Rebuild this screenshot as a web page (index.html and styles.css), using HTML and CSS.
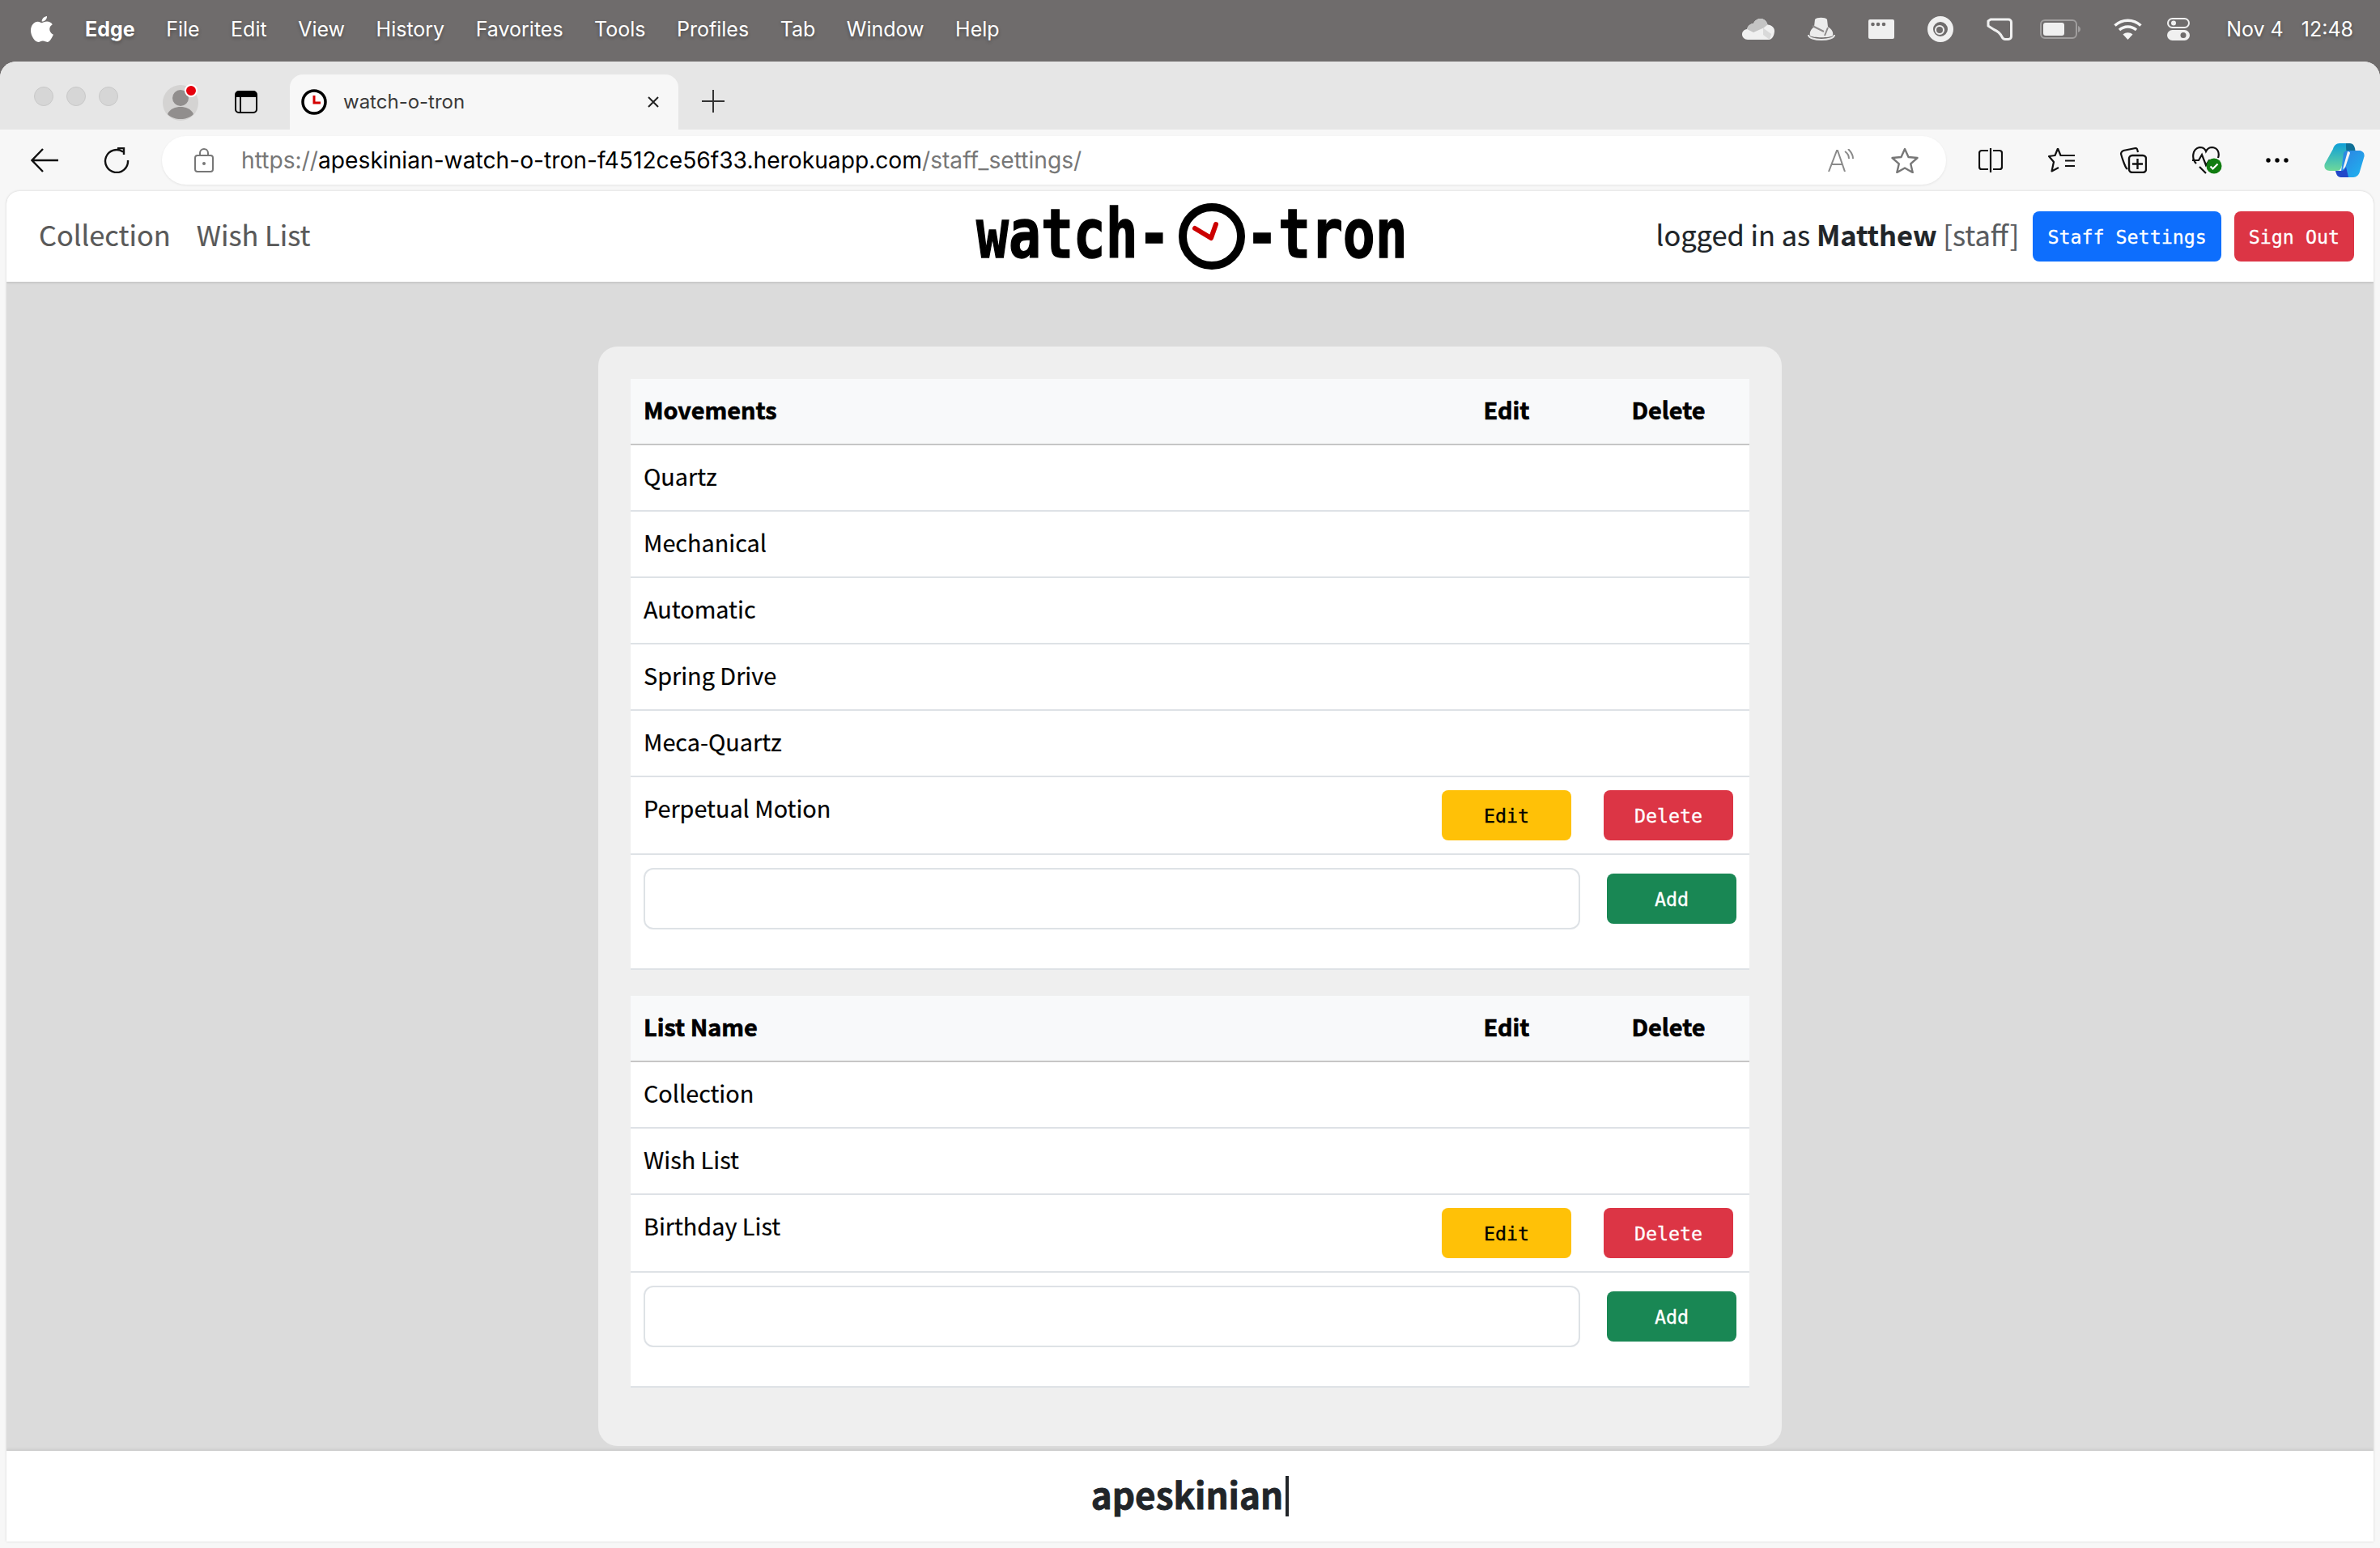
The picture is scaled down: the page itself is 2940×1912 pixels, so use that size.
FILE: index.html
```html
<!DOCTYPE html>
<html>
<head>
    <title>watch-o-tron</title>
    <link rel="stylesheet" href="styles.css">
</head>
<body>
    <!-- mac menu bar -->
    <div class="menubar">
        <svg class="apple" width="28" height="32" viewBox="0 0 28 32"><path fill="#fff" d="M20 0c.3 3-2.600 6.800-6.300 6.600C13.300 3.400 16.500.3 20 0zM13.800 8.200c1.300 0 3.400-1.600 6.200-1.600 2.700 0 5.300 1.300 6.800 3.600-5.300 3-4.500 10.300 1.100 12.500-1.300 3.300-4.300 9.200-7.500 9.200-2 0-3-1.300-5.500-1.300-2.600 0-3.700 1.400-5.500 1.400C5 32 0 24.300 0 17.800 0 11 4.400 6.800 8.600 6.800c2.200 0 4 1.400 5.200 1.400z"/></svg>
        <ul class="menu">
            <li class="app-name">Edge</li>
            <li>File</li>
            <li>Edit</li>
            <li>View</li>
            <li>History</li>
            <li>Favorites</li>
            <li>Tools</li>
            <li>Profiles</li>
            <li>Tab</li>
            <li>Window</li>
            <li>Help</li>
        </ul>
        <div class="status-icons">
            <svg width="40" height="26" viewBox="0 0 40 26"><path fill="#f0f0f0" d="M7 26C3 26 0 23 0 19.500 0 16 2.500 13.500 6 13 7.500 8 11 6 14 6c1.500-3.500 5-6 8.500-6 4.500 0 8 3 9 7.500C36.500 8 40 11 40 15c0 .5 0 9-6 11z"/><path fill="#c4c4c4" d="M6 13C7.500 8 11 6 14 6c1.500-3.500 5-6 8.500-6 4.500 0 8 3 9 7.500l-5 4L14 17z"/><path fill="#d9d9d9" d="M26 11.500L36 19l-2 7-8-6z"/></svg>
            <svg width="34" height="30" viewBox="0 0 34 30"><path fill="#ececec" d="M9 3c2-3 13-3 15 0l1 9c5 3 7 7 6 11-3 3-25 3-28 0C2 19 4 15 8 12z"/><path fill="none" stroke="#8d8a8a" stroke-width="2" d="M6 11l14 7M25 13l-4 10"/><path fill="none" stroke="#e8e8e8" stroke-width="2" d="M1 22c0 8 32 8 32 0"/></svg>
            <svg width="32" height="24" viewBox="0 0 32 24"><path fill="#f0f0f0" d="M2 0h28a2 2 0 0 1 2 2v20a2 2 0 0 1-2 2H2a2 2 0 0 1-2-2V2a2 2 0 0 1 2-2z"/><circle cx="5.500" cy="6" r="2.300" fill="#6f6c6c"/><circle cx="12" cy="6" r="2.300" fill="#6f6c6c"/><circle cx="19" cy="6" r="2.300" fill="#6f6c6c"/></svg>
            <svg width="32" height="32" viewBox="0 0 32 32"><circle cx="16" cy="16" r="12.500" fill="none" stroke="#f0f0f0" stroke-width="7"/><circle cx="15" cy="17" r="5" fill="none" stroke="#f0f0f0" stroke-width="2"/></svg>
            <svg width="32" height="28" viewBox="0 0 32 28"><path fill="none" stroke="#f0f0f0" stroke-width="3" stroke-linejoin="round" d="M5 2h22a3.500 3.500 0 0 1 3.500 3.500V23a3.500 3.500 0 0 1-3.500 3.500h-4c-2 0-3-1-4-3-2-4-5-7-10-9L2 10V4z"/></svg>
            <svg class="battery" width="50" height="24" viewBox="0 0 50 24"><rect x="1" y="1" width="44" height="22" rx="5" fill="none" stroke="#a09e9e" stroke-width="2"/><rect x="4" y="4" width="26" height="16" rx="3" fill="#f0f0f0"/><path fill="#a09e9e" d="M47 8c2 1 3 2 3 4s-1 3-3 4z"/></svg>
            <svg width="35" height="26" viewBox="0 0 35 26"><path fill="none" stroke="#f5f5f5" stroke-width="3.500" d="M1.500 8.500c9-8.500 23-8.500 32 0M7 14c6-5.500 15-5.500 21 0"/><path fill="#f5f5f5" d="M17.500 26l-6-6.500c3.500-3 8.500-3 12 0z"/></svg>
            <svg class="control" width="28" height="28" viewBox="0 0 28 28"><rect x="1" y="1" width="26" height="11" rx="5.500" fill="none" stroke="#f0f0f0" stroke-width="2"/><circle cx="8" cy="6.500" r="3" fill="#f0f0f0"/><rect y="15" width="28" height="13" rx="6.500" fill="#f0f0f0"/><circle cx="20" cy="21.500" r="3.500" fill="#6f6c6c"/></svg>
            <div class="clock"><span>Nov 4</span><span>12:48</span></div>
        </div>
    </div>

    <div class="window">
        <!-- tabs -->
        <div class="tabstrip">
            <div class="lights"><i></i><i></i><i></i></div>
            <svg class="profile" width="46" height="46" viewBox="0 0 46 46"><circle cx="22" cy="24" r="22" fill="#d4d3d2"/><circle cx="22" cy="18" r="10" fill="#918e8d"/><path fill="#918e8d" d="M6 38c3-7 10-9 16-9s13 2 16 9c-8 8-24 8-32 0z"/><circle cx="35" cy="9" r="7" fill="#e6000d" stroke="#fff" stroke-width="2"/></svg>
            <svg class="tab-actions" width="28" height="28" viewBox="0 0 28 28"><rect x="1" y="1" width="26" height="26" rx="4" fill="none" stroke="#000" stroke-width="2"/><path d="M1 8V5a4 4 0 0 1 4-4h18a4 4 0 0 1 4 4v3z"/><path stroke="#000" stroke-width="2" d="M7 8v19"/></svg>
            <div class="tab">
                <svg width="32" height="32" viewBox="0 0 32 32"><circle cx="16" cy="16" r="14" fill="#fff" stroke="#000" stroke-width="3.500"/><path fill="none" stroke="#d40000" stroke-width="3" d="M16 8v9h8"/></svg>
                <span class="tab-title">watch-o-tron</span>
                <svg class="tab-close" width="16" height="16" viewBox="0 0 16 16"><path stroke="#222" stroke-width="2" d="M2 2l12 12M14 2L2 14"/></svg>
            </div>
            <svg class="new-tab" width="28" height="28" viewBox="0 0 28 28"><path stroke="#333" stroke-width="2" d="M14 0v28M0 14h28"/></svg>
        </div>

        <!-- address bar -->
        <div class="toolbar">
            <svg class="back" width="34" height="30" viewBox="0 0 34 30"><path fill="none" stroke="#111" stroke-width="2.400" d="M34 15H2M15 1L1.500 15 15 29"/></svg>
            <svg class="reload" width="32" height="32" viewBox="0 0 32 32"><path fill="none" stroke="#111" stroke-width="2.400" d="M24 5.500A14 14 0 1 0 30 16M17 1h8v8"/></svg>
            <div class="urlbar">
                <svg width="24" height="30" viewBox="0 0 24 30"><rect x="1" y="9" width="22" height="20" rx="3" fill="none" stroke="#777" stroke-width="2"/><path fill="none" stroke="#777" stroke-width="2" d="M7 9V6a5 5 0 0 1 10 0v3"/><circle cx="12" cy="19" r="2" fill="#777"/></svg>
                <div class="url">https://<b>apeskinian-watch-o-tron-f4512ce56f33.herokuapp.com</b>/staff_settings/</div>
                <svg class="read-aloud" width="32" height="28" viewBox="0 0 32 28"><path fill="none" stroke="#8a8a8a" stroke-width="2" d="M1 28L11 2h1l9 26M5 19h13M21 3c3 2 5 5 5 9M25 0c3 3 6 7 6 12"/></svg>
                <svg class="star" width="34" height="32" viewBox="0 0 34 32"><path fill="none" stroke="#777" stroke-width="2.400" stroke-linejoin="round" d="M17 2l4.500 10 11 1-8.300 7.300 2.500 10.700L17 25.500 7.300 31l2.500-10.700L1.500 13l11-1z"/></svg>
            </div>
            <div class="tools">
                <svg width="30" height="30" viewBox="0 0 30 30"><path fill="none" stroke="#111" stroke-width="2.200" d="M12 3H4a3 3 0 0 0-3 3v17a3 3 0 0 0 3 3h8M18 3h8a3 3 0 0 1 3 3v17a3 3 0 0 1-3 3h-8M15 0v30"/></svg>
                <svg width="33" height="32" viewBox="0 0 33 32"><path fill="none" stroke="#111" stroke-width="2.200" stroke-linejoin="round" d="M12 1.500L8.500 10 1 11l6 7-2.500 11.500L13 25M12 1.500l3.500 8.500H33M21 16.500h12M21 23h12"/></svg>
                <svg width="33" height="32" viewBox="0 0 33 32"><rect x="11" y="10" width="21" height="21" rx="4" fill="none" stroke="#111" stroke-width="2.400"/><path stroke="#111" stroke-width="2.400" d="M21.500 14v13M15 20.500h13"/><path fill="none" stroke="#111" stroke-width="2.200" d="M9 27l-1-1C6 24 2 12 1 8c0-2 1-3 3-4l15-3c2 0 2 1 3 5"/></svg>
                <svg width="37" height="34" viewBox="0 0 37 34"><path fill="none" stroke="#111" stroke-width="2.200" d="M5 21C-1 15 0 3 9 1c4 0 7 2 8 5 2-4 5-5 8-5 7 1 9 7 7 13M0 17h8l4-7 5 13 4-6h4M9 25l8 8"/><circle cx="27" cy="24" r="9.500" fill="#107c10"/><path fill="none" stroke="#fff" stroke-width="2.200" d="M22.500 24.500l3 3 6-6"/></svg>
                <svg class="more" width="28" height="6" viewBox="0 0 28 6"><circle cx="3" cy="3" r="2.700"/><circle cx="14" cy="3" r="2.700"/><circle cx="25" cy="3" r="2.700"/></svg>
                <svg class="copilot" width="50" height="42" viewBox="0 0 50 42"><defs><linearGradient id="cpa" x1="0" y1="0" x2="0" y2="1"><stop offset="0" stop-color="#0d9fd8"/><stop offset="1" stop-color="#6ed89a"/></linearGradient><linearGradient id="cpb" x1="0" y1="0" x2="1" y2="1"><stop offset="0" stop-color="#2e7fe0"/><stop offset="1" stop-color="#1fb6f0"/></linearGradient></defs><path fill="url(#cpa)" d="M11 7c1-4 4-7 8-7h13l-11 30c-1 3-3 4-6 4H7c-5 0-8-4-6-9z"/><path fill="#0e6f96" d="M27 0h5c3 0 5 2 6 6l1 6-10-1c-2-1-2-4-2-11z"/><path fill="url(#cpb)" d="M24 12c1-2 3-3 5-3h14c5 0 8 4 6 9l-5 17c-1 4-4 7-8 7H20z"/><path fill="#2147c9" d="M14 34h7c3 0 5-2 6-5l3 13h-9c-4 0-6-3-7-8z"/><path fill="#f5f5f5" d="M29 10l-6 22c2-1 3-2 4-5l5-15c0-1-1-2-3-2z"/></svg>
            </div>
        </div>

        <div class="page">
            <header class="site-header">
                <nav class="site-nav">
                    <a>Collection</a>
                    <a>Wish List</a>
                </nav>
                <div class="logo">
                    <span class="logo-text">watch-</span>
                    <svg width="84" height="84" viewBox="0 0 84 84"><circle cx="42" cy="42" r="36" fill="none" stroke="#000" stroke-width="10"/><path fill="none" stroke="#cc0000" stroke-width="6" stroke-linecap="round" stroke-linejoin="round" d="M21 32l20 12 6-17"/></svg>
                    <span class="logo-text">-tron</span>
                </div>
                <div class="user-box">
                    <span class="user-text">logged in as <b>Matthew</b> <span class="muted">[staff]</span></span>
                    <button class="btn btn-blue">Staff Settings</button>
                    <button class="btn btn-red">Sign Out</button>
                </div>
            </header>

            <main class="content">
                <div class="panel">
                    <table class="list-table">
                        <thead>
                            <tr><th>Movements</th><th class="col-btn">Edit</th><th class="col-btn">Delete</th></tr>
                        </thead>
                        <tbody>
                            <tr><td>Quartz</td><td></td><td></td></tr>
                            <tr><td>Mechanical</td><td></td><td></td></tr>
                            <tr><td>Automatic</td><td></td><td></td></tr>
                            <tr><td>Spring Drive</td><td></td><td></td></tr>
                            <tr><td>Meca-Quartz</td><td></td><td></td></tr>
                            <tr>
                                <td>Perpetual Motion</td>
                                <td class="col-btn"><button class="btn btn-row btn-yellow">Edit</button></td>
                                <td class="col-btn"><button class="btn btn-row btn-red">Delete</button></td>
                            </tr>
                            <tr>
                                <td colspan="3" class="add-cell">
                                    <form class="add-form">
                                        <input type="text">
                                        <button type="button" class="btn btn-row btn-green">Add</button>
                                    </form>
                                </td>
                            </tr>
                        </tbody>
                    </table>

                    <table class="list-table">
                        <thead>
                            <tr><th>List Name</th><th class="col-btn">Edit</th><th class="col-btn">Delete</th></tr>
                        </thead>
                        <tbody>
                            <tr><td>Collection</td><td></td><td></td></tr>
                            <tr><td>Wish List</td><td></td><td></td></tr>
                            <tr>
                                <td>Birthday List</td>
                                <td class="col-btn"><button class="btn btn-row btn-yellow">Edit</button></td>
                                <td class="col-btn"><button class="btn btn-row btn-red">Delete</button></td>
                            </tr>
                            <tr>
                                <td colspan="3" class="add-cell">
                                    <form class="add-form">
                                        <input type="text">
                                        <button type="button" class="btn btn-row btn-green">Add</button>
                                    </form>
                                </td>
                            </tr>
                        </tbody>
                    </table>
                </div>
            </main>

            <footer class="site-footer"><span class="footer-name">apeskinian</span><span class="cursor"></span></footer>
        </div>
    </div>
</body>
</html>
```

FILE: styles.css
```css
html, body {
    margin: 0;
    height: 1912px;
    overflow: hidden;
}
body {
    background-color: #6f6c6c;
    font-family: "Noto Sans CJK SC", sans-serif;
    color: #212529;
    display: flex;
    flex-direction: column;
}
svg {
    display: block;
    flex: none;
}

/* menu bar */
.menubar {
    height: 76px;
    flex: none;
    display: flex;
    align-items: center;
    padding: 0 33px 5px 38px;
    box-sizing: border-box;
    color: #fff;
    font-family: Inter, sans-serif;
    font-size: 25px;
    text-shadow: 0 2px 4px rgba(0,0,0,0.3);
}
.menu {
    display: flex;
    gap: 38.5px;
    list-style: none;
    margin: 0 0 0 39px;
    padding: 0;
}
.app-name {
    font-weight: 700;
}
.status-icons {
    margin-left: auto;
    display: flex;
    align-items: center;
    gap: 41px;
}
.battery {
    margin-left: -7px;
}
.control {
    margin-left: -10px;
}
.clock {
    display: flex;
    gap: 22px;
    margin-left: 4px;
}

/* browser window */
.window {
    flex: 1;
    display: flex;
    flex-direction: column;
    background-color: #f7f7f7;
    border-radius: 20px 20px 0 0;
    overflow: hidden;
}
.tabstrip {
    height: 84px;
    flex: none;
    background-color: #e6e6e6;
    display: flex;
    align-items: flex-end;
    padding-left: 42px;
    box-sizing: border-box;
}
.lights {
    display: flex;
    gap: 16px;
    align-self: flex-start;
    margin-top: 31px;
}
.lights i {
    width: 24px;
    height: 24px;
    border-radius: 50%;
    background-color: #d6d6d6;
    border: 1px solid #c8c8c8;
    box-sizing: border-box;
}
.profile {
    align-self: flex-start;
    margin: 27px 0 0 55px;
}
.tab-actions {
    align-self: flex-start;
    margin: 36px 0 0 43px;
}
.tab {
    width: 480px;
    height: 68px;
    margin-left: 40px;
    background-color: #f7f7f7;
    border-radius: 16px 16px 0 0;
    display: flex;
    align-items: center;
    padding: 0 23px 0 14px;
    box-sizing: border-box;
}
.tab-title {
    margin-left: 20px;
    font-family: Inter, sans-serif;
    font-size: 24px;
    color: #3a3a3a;
    flex: 1;
    margin-top: -2px;
}
.new-tab {
    align-self: flex-start;
    margin: 35px 0 0 29px;
}

.toolbar {
    height: 76px;
    flex: none;
    display: flex;
    align-items: center;
    padding-left: 38px;
    box-sizing: border-box;
}
.reload {
    margin-left: 56px;
}
.urlbar {
    width: 2204px;
    height: 60px;
    margin-left: 40px;
    background-color: #fff;
    border-radius: 30px;
    box-shadow: 0 1px 3px rgba(0,0,0,0.08);
    display: flex;
    align-items: center;
    padding: 0 34px 0 40px;
    box-sizing: border-box;
}
.url {
    margin-left: 34px;
    flex: 1;
    font-family: Inter, sans-serif;
    font-size: 28.2px;
    color: #777;
    white-space: nowrap;
}
.url b {
    font-weight: 400;
    color: #000;
}
.star {
    margin-left: 46px;
}
.tools {
    display: flex;
    align-items: center;
    gap: 56px;
    margin-left: 40px;
}
.more {
    margin-left: -2px;
}
.copilot {
    margin-left: -12px;
}

/* page */
.page {
    height: 1668px;
    flex: none;
    margin: 0 8px;
    background-color: #dbdbdb;
    border-radius: 16px 16px 0 0;
    overflow: hidden;
    display: flex;
    flex-direction: column;
    box-shadow: 0 0 3px rgba(0,0,0,0.15);
}
.site-header {
    height: 112px;
    flex: none;
    background-color: #fff;
    display: grid;
    grid-template-columns: 1fr auto 1fr;
    align-items: center;
    padding: 0 24px 0 40px;
    box-shadow: 0 1px 3px rgba(0,0,0,0.15);
    font-size: 34.4px;
    line-height: 48px;
}
.site-nav {
    display: flex;
    gap: 32px;
    color: #595959;
    margin-top: -6px;
    -webkit-text-stroke: 0.2px;
}
.logo {
    display: flex;
    align-items: center;
    color: #000;
    margin-right: 16px;
}
.logo-text {
    font-family: "DejaVu Sans Mono", monospace;
    font-weight: 700;
    font-size: 84px;
    line-height: 84px;
    width: 249px;
    margin-top: -7px;
    -webkit-text-stroke: 1.5px;
    transform: scaleX(0.79);
    transform-origin: left center;
    white-space: nowrap;
}
.logo-text:last-child {
    width: 196px;
}
.user-box {
    display: flex;
    align-items: center;
    justify-content: flex-end;
    gap: 16px;
}
.user-text {
    margin: -6px 1px 0 0;
    -webkit-text-stroke: 0.2px;
}
.muted {
    color: #595c5f;
}

.btn {
    font-family: "DejaVu Sans Mono", monospace;
    font-size: 23.3px;
    height: 62px;
    padding: 0 18px;
    border: 0;
    border-radius: 8px;
    color: #fff;
    -webkit-text-stroke: 0.3px;
}
.btn-row {
    width: 160px;
}
.btn-blue {
    background-color: #0d6efd;
}
.btn-red {
    background-color: #dc3545;
}
.btn-yellow {
    background-color: #ffc107;
    color: #000;
}
.btn-green {
    background-color: #198754;
}

.content {
    flex: 1;
    display: flex;
    justify-content: center;
    align-items: flex-start;
    padding-top: 80px;
}
.panel {
    width: 1462px;
    padding: 40px;
    box-sizing: border-box;
    background-color: #efefef;
    border-radius: 24px;
}
.list-table {
    width: 100%;
    border-collapse: separate;
    border-spacing: 0;
    table-layout: fixed;
    margin-bottom: 32px;
    background-color: #fff;
    font-size: 28.8px;
    line-height: 48px;
    color: #000;
    -webkit-text-stroke: 0.2px;
}
.list-table th,
.list-table td {
    padding: 14px 16px 18px;
    border-bottom: 2px solid #dee2e6;
    text-align: left;
    vertical-align: top;
}
.list-table th {
    background-color: #f8f9fa;
    border-bottom-color: #c6c6c6;
    font-weight: 700;
    -webkit-text-stroke: 0.7px;
}
.list-table .col-btn {
    width: 168px;
    text-align: center;
}
.list-table td.col-btn {
    padding-top: 16px;
    padding-bottom: 16px;
}
.list-table td.add-cell {
    padding-top: 16px;
    padding-bottom: 48px;
}
.add-form {
    display: flex;
    align-items: center;
    gap: 33px;
}
.add-form input {
    flex: 1;
    height: 76px;
    box-sizing: border-box;
    background-color: #fff;
    border: 2px solid #dee2e6;
    border-radius: 12px;
}

.site-footer {
    height: 112px;
    flex: none;
    background-color: #fff;
    display: flex;
    align-items: center;
    justify-content: center;
    box-shadow: 0 -2px 3px rgba(0,0,0,0.08);
}
.footer-name {
    font-size: 44px;
    font-weight: 700;
    margin-top: -6px;
    -webkit-text-stroke: 0.8px;
}
.cursor {
    width: 4px;
    height: 50px;
    margin: 0 0 0 3px;
    background-color: #212529;
}
```
